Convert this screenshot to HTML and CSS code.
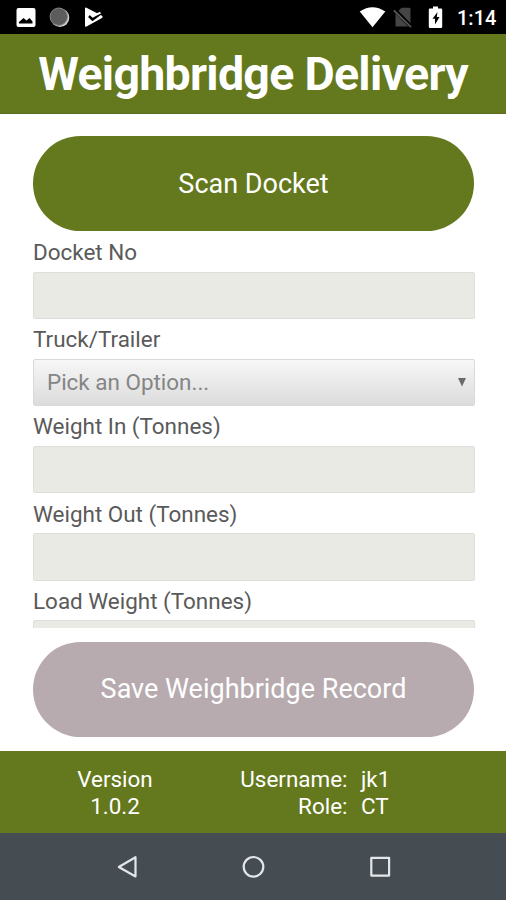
FILE: index.html
```
<!DOCTYPE html>
<html lang="en">
<head>
<meta charset="utf-8">
<title>Weighbridge Delivery</title>
<link rel="stylesheet" href="styles.css">
</head>
<body>
<div class="status">
  <svg class="status-left" width="110" height="34" viewBox="0 0 110 34">
    <path fill="#fff" fill-rule="evenodd" d="M18.500 8h15a2 2 0 0 1 2 2v15a2 2 0 0 1-2 2h-15a2 2 0 0 1-2-2v-15a2 2 0 0 1 2-2zM19 23.500h13.500v-2l-3-3.500-3 2.500-3-2.500-4.500 4z"/>
    <circle cx="60" cy="17.700" r="9.300" fill="#d0d0d0"/>
    <circle cx="58.800" cy="16.700" r="8.700" fill="#5c5c5c" stroke="#858585" stroke-width="1"/>
    <path fill="#fff" d="M85 8.500q0-1.500 1.500-.7l15.500 8q1.500 1.200 0 2.200l-15.500 8.500q-1.500.6-1.500-.8z"/>
    <path d="M89 16l3.500 3.500L102 12.500" fill="none" stroke="#000" stroke-width="2.500"/>
    <path d="M90 13.500l3 2.700 7.500-3.500" fill="none" stroke="#fff" stroke-width="2"/>
  </svg>
  <svg class="status-right" width="96" height="34" viewBox="356 0 96 34">
    <path fill="#fff" d="M359.700 11.500Q372.500 2.800 385.300 11.500L372.500 27.300z"/>
    <path fill="#454545" d="M401.500 7.700h7.500q1.500 0 1.500 1.500v17.300h-15V13.500z"/>
    <path d="M394 9.200l17 17.500" stroke="#000" stroke-width="4"/>
    <path d="M393.800 10.300l17.200 16.900" stroke="#5a5a5a" stroke-width="1.700"/>
    <path fill="#fff" d="M430 8.500h3V6.500h5v2h3q1.200 0 1.200 1.200v17q0 1.200-1.200 1.200h-11q-1.200 0-1.200-1.200v-17q0-1.200 1.200-1.200z"/>
    <path d="M437.500 12l-5 6.800h2.500v5.800l4.500-7.600h-2.700z"/>
  </svg>
  <span class="clock">1:14</span>
</div>
<header class="header"><h1 class="title">Weighbridge Delivery</h1></header>
<main class="main">
  <button class="pill">Scan Docket</button>
  <div class="form">
    <div class="field"><span class="label">Docket No</span><div class="box"></div></div>
    <div class="field"><span class="label">Truck/Trailer</span>
      <div class="box select"><span>Pick an Option...</span>
        <svg width="8" height="9" viewBox="0 0 8 9"><path d="M0 0h8L4 8.500z" fill="#6a6a6a"/></svg>
      </div>
    </div>
    <div class="field"><span class="label">Weight In (Tonnes)</span><div class="box"></div></div>
    <div class="field"><span class="label">Weight Out (Tonnes)</span><div class="box"></div></div>
    <div class="field"><span class="label">Load Weight (Tonnes)</span><div class="box"></div></div>
  </div>
  <button class="pill save">Save Weighbridge Record</button>
</main>
<footer class="footer">
  <div class="version">Version<br>1.0.2</div>
  <div class="keys">Username:<br>Role:</div>
  <div class="values">jk1<br>CT</div>
</footer>
<nav class="nav">
  <svg width="506" height="67" viewBox="0 833 506 67" fill="none" stroke="#e3e7ea" stroke-width="2.200" stroke-linejoin="round">
    <path d="M135.500 857.200v19.300L118.800 867z"/>
    <circle cx="253.500" cy="866.800" r="9.800"/>
    <rect x="371.300" y="857.800" width="17.800" height="17.800"/>
  </svg>
</nav>
</body>
</html>
```
FILE: styles.css
```
* { box-sizing: border-box; }
body {
  margin: 0;
  width: 506px;
  height: 900px;
  overflow: hidden;
  display: flex;
  flex-direction: column;
  background: #fff;
  font-family: Roboto, sans-serif;
}
.status {
  height: 34px;
  display: flex;
  align-items: center;
  background: #000;
  color: #fff;
}
.status-right { margin-left: 246px; }
.clock { margin-left: 5px; font-size: 20px; font-weight: 500; line-height: 34px; padding-top: 2px; }
.header {
  height: 80px;
  background: #64781d;
  display: flex;
  justify-content: center;
  border-bottom: 1px solid #596b18;
}
.title {
  margin: 0;
  color: #fff;
  font-size: 46.5px;
  letter-spacing: -0.72px;
  line-height: 80px;
  font-weight: 700;
  white-space: nowrap;
}
.main {
  height: 637px;
  padding: 22px 32px 14px 33px;
  display: flex;
  flex-direction: column;
}
.pill {
  width: 441px;
  height: 95px;
  flex: none;
  padding: 0;
  border: 0;
  border-radius: 48px;
  background: #64781d;
  color: #fff;
  font: 400 27px/97px Roboto, sans-serif;
}
.save { margin-top: 14px; background: #b7abaf; line-height: 95px; }
.form { height: 397px; width: 442px; overflow: hidden; }
.field { height: 87.200px; }
.label {
  display: block;
  height: 40.500px;
  line-height: 42.600px;
  font-size: 22.450px;
  color: #5a5a5a;
  white-space: nowrap;
}
.box {
  height: 47.500px;
  background: #e9eae4;
  border: 1px solid #dedfdc;
  border-radius: 2px;
}
.select {
  display: flex;
  align-items: center;
  justify-content: space-between;
  padding: 0 8px 0 13px;
  background: linear-gradient(#f7f7f7, #dcdcdc);
  border-color: #d9d9d9;
  color: #858585;
  font-size: 22.450px;
}
.footer {
  height: 82px;
  padding-top: 15px;
  display: flex;
  background: #64781d;
  color: #fff;
  font-size: 22.450px;
  line-height: 26.500px;
}
.version { width: 230px; text-align: center; }
.keys { width: 117.500px; text-align: right; }
.values { margin-left: 13.500px; }
.nav { height: 67px; background: #454c52; }
.nav svg { display: block; }
```
